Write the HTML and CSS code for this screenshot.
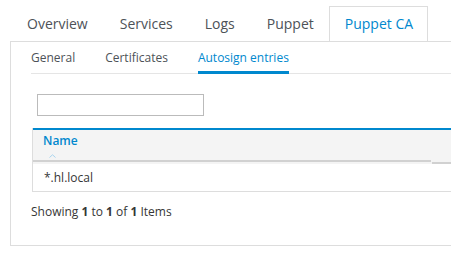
FILE: index.html
```html
<!DOCTYPE html>
<html>
<head>
<meta charset="utf-8">
<link rel="stylesheet" href="styles.css">
</head>
<body>
<div class="page">
  <ul class="tabs">
    <li class="tab">Overview</li>
    <li class="tab">Services</li>
    <li class="tab">Logs</li>
    <li class="tab">Puppet</li>
    <li class="tab active">Puppet CA</li>
  </ul>
  <div class="panel">
    <ul class="subtabs">
      <li class="subtab">General</li>
      <li class="subtab">Certificates</li>
      <li class="subtab active">Autosign entries</li>
    </ul>
    <input class="filter" type="text">
    <div class="table">
      <div class="thead">
        <div class="th th-name">
          <span class="th-label">Name</span>
          <svg class="caret" width="7" height="4" viewBox="0 0 7 4"><polyline points="0.5,3.5 3.5,0.8 6.5,3.5" fill="none" stroke="#a8d4ee" stroke-width="1"/></svg>
        </div>
        <div class="th th-rest"></div>
      </div>
      <div class="tr"><div class="td">*.hl.local</div></div>
    </div>
    <p class="summary">Showing <b>1</b> to <b>1</b> of <b>1</b> Items</p>
  </div>
</div>
</body>
</html>
```
FILE: styles.css
```css
html, body {
  margin: 0;
  padding: 0;
  background: #fff;
  overflow: hidden;
}
body {
  font-family: "Open Sans", "Noto Sans", sans-serif;
  color: #363636;
}
.page {
  width: 600px;
  padding: 6px 0 0 10px;
}
.tabs {
  list-style: none;
  margin: 0;
  padding: 0;
  display: flex;
}
.tab {
  font-size: 14px;
  line-height: 20px;
  padding: 7px 14px 7px 16px;
  border: 1px solid transparent;
  border-bottom: 0;
  color: #4d5258;
}
.tab.active {
  color: #0088ce;
  border-color: #ddd;
  padding-left: 15px;
}
.panel {
  border: 1px solid #ddd;
  border-right: 0;
  padding: 0 0 0 20px;
  height: 203px;
}
.subtabs {
  list-style: none;
  margin: 0;
  padding: 0;
  display: flex;
  gap: 30px;
  border-bottom: 1px solid #e5e5e5;
}
.subtab {
  font-size: 12px;
  line-height: 16px;
  padding: 8px 0 5px;
  border-bottom: 3px solid transparent;
  margin-bottom: -1px;
  color: #4d5258;
}
.subtab.active {
  color: #0088ce;
  border-bottom-color: #0088ce;
}
.filter {
  display: block;
  box-sizing: border-box;
  width: 167px;
  height: 22px;
  margin: 20px 0 0 6px;
  border: 1px solid #bbb;
  padding: 0 4px;
}
.table {
  margin-top: 12px;
  margin-left: 1px;
  border-left: 1px solid #ddd;
}
.thead {
  display: flex;
  border-top: 2px solid #0088ce;
  background: #f4f4f4;
}
.th {
  height: 32px;
  border-bottom: 2px solid #d1d1d1;
}
.th-name {
  width: 398px;
  padding-left: 10px;
  box-sizing: border-box;
  display: flex;
  flex-direction: column;
  align-items: flex-start;
}
.th-rest {
  flex: 1;
  margin-left: 1px;
}
.th-label {
  font-size: 12px;
  font-weight: 600;
  line-height: 16px;
  color: #0088ce;
  margin-top: 3px;
}
.caret {
  margin: 5px 0 0 6px;
}
.tr {
  border-bottom: 1px solid #ddd;
  height: 27px;
  display: flex;
  align-items: center;
}
.td {
  font-size: 12px;
  padding-left: 11px;
  color: #363636;
}
.summary {
  margin: 12px 0 0;
  font-size: 12px;
  line-height: 16px;
  color: #363636;
}
.summary b {
  font-weight: 700;
}
```
